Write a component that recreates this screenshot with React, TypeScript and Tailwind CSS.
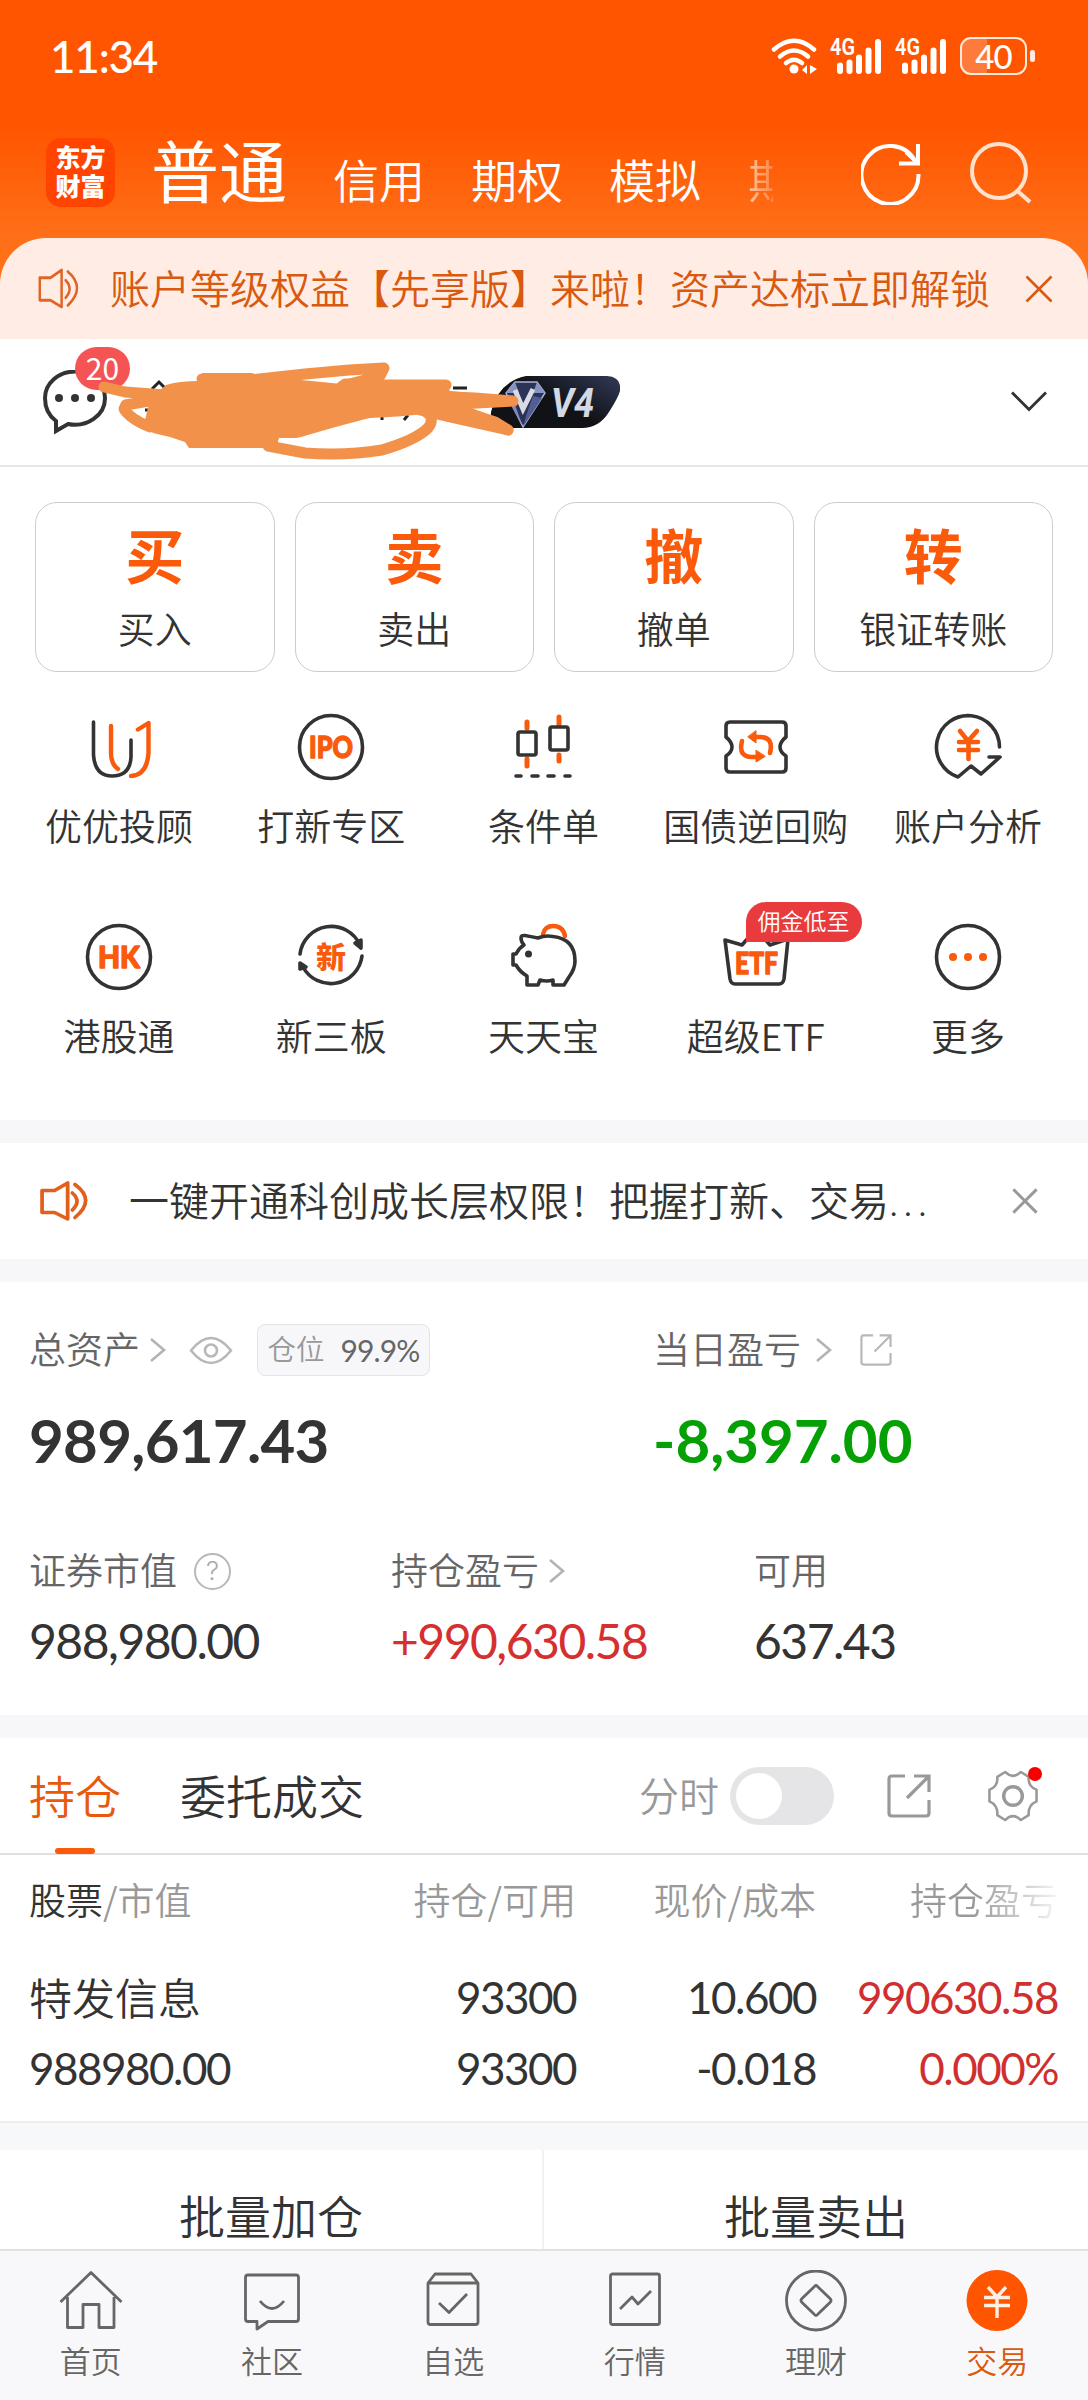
import type { ReactNode } from "react";
import clsx from "clsx";

const cards = [
  { glyph: "买", label: "买入" },
  { glyph: "卖", label: "卖出" },
  { glyph: "撤", label: "撤单" },
  { glyph: "转", label: "银证转账" },
];

const INK = "#333333";
const ORANGE = "#f95a0b";

function Speaker({ className, color, strokeWidth }: { className: string; color: string; strokeWidth: number }) {
  return (
    <svg className={className} viewBox="0 0 46 40" preserveAspectRatio="none" fill="none" stroke={color} strokeWidth={strokeWidth} strokeLinecap="round" strokeLinejoin="round">
      <path d="M2 9.5H14L26.5 2V38L14 31.5H2Z" />
      <path d="M31 12Q40 20 31 29" />
      <path d="M33.5 3.5Q54 19 33.5 36.5" />
    </svg>
  );
}

function Close({ className, color, strokeWidth }: { className: string; color: string; strokeWidth: number }) {
  return (
    <svg className={className} viewBox="0 0 28 28" fill="none" stroke={color} strokeWidth={strokeWidth}>
      <path d="M1.5 1.5L26.5 26.5M26.5 1.5L1.5 26.5" />
    </svg>
  );
}

function Chevron({ className }: { className?: string }) {
  return (
    <svg className={clsx("h-6 w-4 shrink-0", className)} viewBox="0 0 16 24" fill="none" stroke="#b3b3b3" strokeWidth="2.600">
      <path d="M1 1L14 12L1 23" />
    </svg>
  );
}

function Signal() {
  return (
    <svg className="h-9 w-[52px] overflow-visible" viewBox="0 0 52 36" fill="#fff">
      <text x="0" y="17" fontSize="23" fontWeight="600" textLength="25" lengthAdjust="spacingAndGlyphs" fontFamily="Roboto, sans-serif">4G</text>
      <rect x="7" y="24.500" width="6" height="11.500" rx="3" />
      <rect x="16.500" y="21.500" width="6" height="14.500" rx="3" />
      <rect x="26" y="16.500" width="6" height="19.500" rx="3" />
      <rect x="35.500" y="9.500" width="6" height="26.500" rx="3" />
      <rect x="45" y="1" width="6" height="35" rx="3" />
    </svg>
  );
}

function StatusBar() {
  return (
    <div className="flex h-[114px] items-center pr-[53px] pb-0.5 pl-[50px] text-white">
      <span className="w-[110px] font-['Lato',sans-serif] text-[44px] leading-none font-medium tracking-[-1.200px]">11:34</span>
      <svg className="ml-auto h-9 w-[46px]" viewBox="0 0 46 36" fill="none" stroke="#fff" strokeWidth="4.500" strokeLinecap="round">
        <path d="M3 11.500Q23 -6 43 11.500" />
        <path d="M9 18.500Q23 6.500 37 18.500" />
        <path d="M15 25Q23 18.500 31 25" />
        <circle cx="23" cy="31" r="4.500" fill="#fff" stroke="none" />
        <path d="M31 32L36 27V36ZM39 27L46 31L39 36Z" fill="#fff" stroke="none" />
      </svg>
      <div className="ml-[13px] flex gap-[13px]">
        <Signal />
        <Signal />
      </div>
      <div className="ml-[13px] flex items-center gap-[3px]">
        <div className="flex h-[38px] w-[67px] items-center justify-center rounded-[11px] border-[2.500px] border-[#ffeadd] bg-[linear-gradient(90deg,#ff7b3c_40%,transparent_40%)] font-['Lato',sans-serif] text-[33px] leading-none font-medium tracking-[-1px]">
          40
        </div>
        <div className="h-3 w-[5px] rounded-full bg-[#ffeadd]" />
      </div>
    </div>
  );
}

function Header() {
  return (
    <div className="flex h-[124px] pl-[46px] text-white">
      <div className="mt-6 flex h-[69px] w-[69px] flex-col items-center justify-center rounded-[15px] bg-[#ff4400] pb-[3px] text-[25px] leading-[29px] font-black">
        <span>东方</span>
        <span>财富</span>
      </div>
      <div className="ml-9 flex items-baseline whitespace-nowrap">
        <span className="text-[68px] leading-[110px] font-normal">普通</span>
        <span className="ml-[46px] text-[46px]">信用</span>
        <span className="ml-[46px] text-[46px]">期权</span>
        <span className="ml-[46px] text-[46px]">模拟</span>
        <span className="ml-[47px] w-[25px] overflow-hidden bg-[linear-gradient(90deg,#ffc7a0,#ff8543)] bg-clip-text text-[46px] text-transparent">期</span>
      </div>
      <svg className="mt-[29px] ml-[88px] h-[62px] w-[60px]" viewBox="0 0 60 62" fill="none" stroke="#fff" strokeWidth="4">
        <path d="M57.500 31A28.500 29 0 1 1 54 18" />
        <path d="M57 1V20.500H38" />
        <path d="M45 9L57 20" />
      </svg>
      <svg className="mt-7 ml-[49px] h-[62px] w-[63px]" viewBox="0 0 63 62" fill="none" stroke="#ffe3d0" strokeWidth="4">
        <circle cx="29" cy="29" r="27" />
        <path d="M47.500 49L60 60" />
      </svg>
    </div>
  );
}

// Hand-drawn strokes laid over the account name
function Scribble() {
  return (
    <svg className="absolute top-0 left-0 h-[128px] w-[560px]" viewBox="0 0 560 128" fill="none">
      <g stroke="#222" strokeWidth="3">
        <path d="M152 50L159 43L166 50M140 57L144 60M145 71H150" />
        <path d="M374 51H387M382 74V81M404 81L408 76M431 54V60M441 70V73M453 49H467" />
      </g>
      <g stroke="#f2924a" fill="none" strokeLinecap="round" strokeLinejoin="round" strokeWidth="11">
        <path d="M104 48L125 53L165 56" />
        <path d="M240 42L305 35L349 31L384 29L380 37L342 47" />
        <path d="M202 40H250" />
        <path d="M345 45L380 46H446" />
        <path d="M430 57L475 59L513 62L440 66" />
        <path d="M126 66L124 70Q130 80 150 88" />
        <path d="M126 66L160 60" />
        <path d="M268 107L305 114Q345 117 382 111Q416 101 428 89Q436 79 425 72" />
        <path d="M420 71L450 78L508 91" />
        <path d="M430 66L470 75L495 83L508 91" />
      </g>
      <path
        d="M166 46Q178 42 200 42L202 34H252L260 37L342 45H445L450 52L470 54L510 59V67L466 67L495 78L490 86L434 74Q400 78 370 79Q345 85 301 98L296 99H279L276 109H189L185 103L170 98L153 94L144 86L148 68L150 60Z"
        fill="#f2924a"
      />
    </svg>
  );
}

function AccountRow() {
  return (
    <div className="relative flex h-32 items-start border-b-2 border-[#e6e6e6] bg-white">
      <svg className="mt-[31px] ml-[42px] h-[65px] w-[66px]" viewBox="0 0 66 65" fill="none" stroke="#333" strokeWidth="4">
        <path d="M14 51Q3 43 3 28A30 26.500 0 0 1 63 28A30 26.500 0 0 1 26 54L14 61Z" strokeLinejoin="miter" />
        <g fill="#333" stroke="none">
          <circle cx="17" cy="28" r="4" />
          <circle cx="33" cy="28" r="4" />
          <circle cx="49" cy="28" r="4" />
        </g>
      </svg>
      <div className="absolute top-2 left-[75px] flex h-[43px] w-[55px] items-center justify-center rounded-full bg-[#f55454] pb-[3px] text-[30px] leading-none font-normal text-white">
        20
      </div>
      <svg className="mt-[37px] ml-[382px] h-[52px] w-[130px]" viewBox="0 0 130 52">
        <defs>
          <linearGradient id="vip" x1="0.200" x2="0.900" y1="0.500" y2="0">
            <stop offset="0.300" stopColor="#111216" />
            <stop offset="1" stopColor="#2d3550" />
          </linearGradient>
        </defs>
        <path d="M36 0H117Q132 1 130 15Q128 22 119 36Q109 52 92 52H6Q0 50 1 36Q8 6 36 0Z" fill="url(#vip)" />
        <path d="M25 6H47L55 17L33 51L16 17Z" fill="#2c3358" stroke="#aab4d6" strokeWidth="1.500" />
        <path d="M25 6L29 17L16 17ZM47 6L43 17L55 17Z" fill="#8793c0" />
        <path d="M22 20L29 40L33 51L18 24Z" fill="#7e89b8" />
        <path d="M43 20L36 40L33 51L52 22Z" fill="#525d94" />
        <path d="M25 14L33 33L43 13" fill="none" stroke="#d9dbe4" strokeWidth="5" />
        <text x="61" y="41" fontSize="41" fontWeight="700" fontStyle="italic" fill="#d3d8e4" textLength="43" lengthAdjust="spacingAndGlyphs" fontFamily="Roboto, sans-serif">V4</text>
      </svg>
      <Scribble />
      <svg className="mt-[52px] ml-[391px] h-[22px] w-9" viewBox="0 0 36 22" fill="none" stroke="#333" strokeWidth="3">
        <path d="M1 1.500L18 18.500L35 1.500" />
      </svg>
    </div>
  );
}

function IconSvg({ children }: { children: ReactNode }) {
  return (
    <svg className="h-[72px] w-[72px] overflow-visible" viewBox="0 0 72 72" fill="none" stroke={INK} strokeWidth="3.600" strokeLinecap="round" strokeLinejoin="round">
      {children}
    </svg>
  );
}

function IconText({ x, y, width, children }: { x: number; y: number; width: number; children: string }) {
  return (
    <text x={x} y={y} fontSize="31" fontWeight="900" fill={ORANGE} stroke={ORANGE} strokeWidth="1.400" textLength={width} lengthAdjust="spacingAndGlyphs" fontFamily="Lato, sans-serif">
      {children}
    </text>
  );
}

const tools: { label: string; tag?: string; icon: ReactNode }[] = [
  {
    label: "优优投顾",
    icon: (
      <>
        <path d="M10.500 11V44Q12 65 29 65Q47 65 48 46V29" />
        <g stroke={ORANGE} strokeWidth="4.400">
          <path d="M28 15V42Q28 53 35 58" />
          <path d="M55 18.500L65.500 12V42Q64 64 48 65" />
        </g>
      </>
    ),
  },
  {
    label: "打新专区",
    icon: (
      <>
        <circle cx="36" cy="36" r="31.500" />
        <IconText x={14} y={47} width={44}>IPO</IconText>
      </>
    ),
  },
  {
    label: "条件单",
    icon: (
      <>
        <g stroke={ORANGE} strokeWidth="5">
          <path d="M20 11V17M20 48V55M52 6V14M52 44V50" />
        </g>
        <rect x="11" y="21" width="18" height="23" rx="2" />
        <rect x="43" y="16" width="18" height="23" rx="2" />
        <path d="M9 65H14M25 65H31M41 65H47M58 65H63" />
      </>
    ),
  },
  {
    label: "国债逆回购",
    icon: (
      <>
        <path d="M10 11H62Q66 11 66 15V26Q60 31 60 36Q60 41 66 45V57Q66 61 62 61H10Q6 61 6 57V45Q12 41 12 36Q12 31 6 26V15Q6 11 10 11Z" />
        <g stroke={ORANGE} strokeWidth="4.600">
          <path d="M22 30Q18 46 32 46H37" />
          <path d="M50 42Q54 26 40 26H35" />
        </g>
        <path d="M36 39.500V51L45 45.500ZM36 20V32L28 26Z" fill={ORANGE} stroke={ORANGE} strokeWidth="1" />
      </>
    ),
  },
  {
    label: "账户分析",
    icon: (
      <>
        <path d="M67.500 36A31.500 31.500 0 1 0 26 66L39 55L49 63L68 46H57" />
        <g stroke={ORANGE} strokeWidth="4.600">
          <path d="M28 20L36 30L45 20M27 31H46M27 39H46M36.500 31V48" />
        </g>
      </>
    ),
  },
  {
    label: "港股通",
    icon: (
      <>
        <circle cx="36" cy="36" r="31.500" />
        <IconText x={15} y={47} width={42}>HK</IconText>
      </>
    ),
  },
  {
    label: "新三板",
    icon: (
      <>
        <path d="M5 33A31.500 31.500 0 0 1 65 24" />
        <path d="M67 35A31.500 31.500 0 0 1 8 46" />
        <path d="M60 22L66 27V19ZM5 48V42L11 46Z" fill={INK} />
        <text x="21" y="47" fontSize="30" fontWeight="900" fill={ORANGE} stroke="none" fontFamily="'Noto Sans CJK SC', sans-serif">新</text>
      </>
    ),
  },
  {
    label: "天天宝",
    icon: (
      <>
        <path d="M36 13Q38 5 46 5Q56 5 58 15" stroke={ORANGE} strokeWidth="4.400" />
        <path d="M14 17Q14 14 18 14.500Q26 16 31 17Q38 14 46 15.500Q68 18 68 40Q68 48 62 56L57 64H46V59Q40 61 33 59L31 64H20V55Q13 51 9 44H6V33H9Q12 27 17 24Q14 21 14 17Z" />
        <circle cx="21.500" cy="33" r="3.500" fill={INK} stroke="none" />
      </>
    ),
  },
  {
    label: "超级ETF",
    tag: "佣金低至",
    icon: (
      <>
        <path d="M5 19L22 24L36 8L50 24L68 18L64 58Q63 63 59 63H15Q11 63 10 58Z" />
        <IconText x={15} y={52.500} width={43}>ETF</IconText>
      </>
    ),
  },
  {
    label: "更多",
    icon: (
      <>
        <circle cx="36" cy="36" r="31.500" />
        <g fill={ORANGE} stroke="none">
          <circle cx="21" cy="36" r="4" />
          <circle cx="36" cy="36" r="4" />
          <circle cx="51" cy="36" r="4" />
        </g>
      </>
    ),
  },
];

function ToolGrid() {
  return (
    <div className="grid h-[448px] auto-rows-[210px] grid-cols-5 pt-[39px] pr-[14px] pl-[13px]">
      {tools.map((tool) => (
        <div key={tool.label} className="relative flex flex-col items-center">
          <IconSvg>{tool.icon}</IconSvg>
          <div className="mt-6 text-[37px] leading-[36px] whitespace-nowrap">{tool.label}</div>
          {tool.tag && (
            <div className="absolute -top-[19px] left-[96px] flex h-10 w-[116px] items-center justify-center rounded-[20px] rounded-bl-none bg-[#e93b3d] pb-[4px] text-[23px] leading-none text-white">
              {tool.tag}
            </div>
          )}
        </div>
      ))}
    </div>
  );
}

function Share({ className, strokeWidth }: { className: string; strokeWidth: number }) {
  return (
    <svg className={className} viewBox="0 0 44 44" fill="none" stroke="currentColor" strokeWidth={strokeWidth}>
      <path d="M18 2H5Q2 2 2 5V39Q2 42 5 42H39Q42 42 42 39V26" />
      <path d="M27 2H42V18M41 3L20 24" />
    </svg>
  );
}

function Assets() {
  return (
    <div className="h-[433px] pl-[29px] text-[#666]">
      <div className="flex h-[136px] items-center">
        <div className="flex w-[624px] items-center">
          <span className="pb-1 text-[37px] leading-none">总资产</span>
          <Chevron className="ml-[10px]" />
          <svg className="ml-[23px] h-[29px] w-[44px]" viewBox="0 0 44 28" fill="none" stroke="#b8b8b8" strokeWidth="2.600">
            <path d="M2 14Q22 -11 42 14Q22 39 2 14Z" />
            <circle cx="22" cy="14" r="6" />
          </svg>
          <div className="ml-6 flex h-[52px] w-[173px] items-center justify-center gap-4 rounded-lg border border-[#e3e3e8] bg-[#f7f7fa]">
            <span className="pb-[3px] text-[28.500px] leading-none text-[#999]">仓位</span>
            <span className="font-['Lato',sans-serif] text-[30px] leading-none font-normal tracking-[-0.900px]">99.9%</span>
          </div>
        </div>
        <span className="pb-1 text-[37px] leading-none">当日盈亏</span>
        <Chevron className="ml-[15px]" />
        <Share className="ml-[28px] h-8 w-8 text-[#b8b8b8]" strokeWidth={3} />
      </div>
      <div className="flex h-[43px] items-center font-['Lato',sans-serif] text-[60px] leading-none font-bold">
        <span className="w-[624px] tracking-[-0.700px] text-[#333]">989,617.43</span>
        <span className="text-[#04a004]">-8,397.00</span>
      </div>
      <div className="mt-[87px] flex h-[42px] items-center text-[37px] leading-none">
        <div className="flex w-[362px] items-center">
          证券市值
          <div className="mt-1 ml-[17px] flex h-[37px] w-[37px] items-center justify-center rounded-full border-[2.500px] border-[#b8b8b8] font-['Inter',sans-serif] text-[26px] text-[#aaa]">?</div>
        </div>
        <div className="flex w-[363px] items-center">
          持仓盈亏
          <Chevron className="mt-1 ml-[10px]" />
        </div>
        可用
      </div>
      <div className="mt-[28px] flex h-[46px] items-center font-['Lato',sans-serif] text-[48px] leading-none font-normal tracking-[-1.500px] text-[#333]">
        <span className="w-[362px]">988,980.00</span>
        <span className="w-[363px] text-[#d5302f]">+990,630.58</span>
        <span>637.43</span>
      </div>
    </div>
  );
}

function HoldingTabs() {
  return (
    <div className="relative flex h-[117px] items-center border-b-2 border-[#e0e0e0] pl-[29px] text-[46px] leading-none">
      <span className="pb-1 text-[#e8590c]">持仓</span>
      <span className="ml-[59px] pb-1">委托成交</span>
      <span className="ml-[275px] pb-1 text-[40px] text-[#999]">分时</span>
      <div className="ml-[11px] flex h-[58px] w-[104px] items-center rounded-full bg-[#e5e5e7] px-[6px]">
        <div className="h-[46px] w-[46px] rounded-full bg-white" />
      </div>
      <Share className="ml-[53px] h-11 w-11 text-[#999]" strokeWidth={3.2} />
      <div className="relative ml-[56px]">
        <svg className="h-[52px] w-[52px]" viewBox="0 0 52 53" fill="none" stroke="#999" strokeWidth="2.600" strokeLinejoin="round">
          <path d="M18 2Q26 10 34 2L42 7Q41 17 50 20V32Q41 36 42 46L34 51Q26 43 18 51L10 46Q11 36 2 32V20Q11 17 10 7Z" />
          <circle cx="26" cy="26.500" r="9.500" strokeWidth="3.500" />
        </svg>
        <div className="absolute -top-[3px] left-[41px] h-[14px] w-[14px] rounded-full bg-[#f90000]" />
      </div>
      <div className="absolute -bottom-px left-[55px] h-[6px] w-10 rounded-full bg-[#fa5a0a]" />
    </div>
  );
}

function HoldingTable() {
  return (
    <div className="grid h-[266px] grid-cols-[307px_240px_240px_242px] grid-rows-[88px_108px_34px] items-center pl-[29px] text-right leading-none">
      <span className="text-left text-[37px] text-[#999]">
        <span className="text-[#333]">股票</span>/市值
      </span>
      <span className="text-[37px] text-[#999]">持仓/可用</span>
      <span className="text-[37px] text-[#999]">现价/成本</span>
      <span className="bg-[linear-gradient(90deg,#999_65%,#f5f5f5)] bg-clip-text text-[37px] leading-[48px] text-transparent">持仓盈亏</span>

      <span className="pb-0.5 text-left text-[43px]">特发信息</span>
      <Num>93300</Num>
      <Num>10.600</Num>
      <Num red>990630.58</Num>

      <Num left>988980.00</Num>
      <Num>93300</Num>
      <Num>-0.018</Num>
      <Num red>0.000%</Num>
    </div>
  );
}

function Num({ children, red, left }: { children: ReactNode; red?: boolean; left?: boolean }) {
  return (
    <span className={clsx("font-['Lato',sans-serif] text-[44px] font-normal tracking-[-1.500px]", red && "text-[#d02f2f]", left && "text-left")}>
      {children}
    </span>
  );
}

const nav: { label: string; icon: ReactNode }[] = [
  { label: "首页", icon: <path d="M1.500 32L32 2.500L62.500 32M8.500 27V57.500H24V34.500H40V57.500H55V27" /> },
  {
    label: "社区",
    icon: (
      <>
        <path d="M8 5H56Q58.500 5 58.500 7.500V49Q58.500 51.500 56 51.500H28L17 59V51.500H8Q5.500 51.500 5.500 49V7.500Q5.500 5 8 5Z" />
        <path d="M20 31Q32 46 44 31" />
      </>
    ),
  },
  {
    label: "自选",
    icon: (
      <>
        <path d="M7 13V52Q7 54.500 9.500 54.500H54.500Q57 54.500 57 52V13L50 4H14L7 13H57" />
        <path d="M18 33L28 42.500L46 24" />
      </>
    ),
  },
  {
    label: "行情",
    icon: (
      <>
        <rect x="7.500" y="4" width="49" height="50.500" rx="2" />
        <path d="M17 39L29 27L35 34L48 21" />
      </>
    ),
  },
  {
    label: "理财",
    icon: (
      <>
        <circle cx="32" cy="30.500" r="29.500" />
        <path d="M30 17Q32 14 34 17L46 28.500Q48 30.500 46 32.500L34 44Q32 47 30 44L18 32.500Q16 30.500 18 28.500Z" />
      </>
    ),
  },
  {
    label: "交易",
    icon: (
      <>
        <circle cx="32" cy="30.500" r="30.500" fill="#ff5500" stroke="none" />
        <path d="M23 17L32 27L41 17M19 27.500H45M19 35.500H45M32 27V48" stroke="#fff0e4" strokeWidth="3.400" />
      </>
    ),
  },
];

function BottomNav() {
  return (
    <nav className="grid h-[151px] grid-cols-6 border-t-2 border-[#e2e2e4] bg-[#f8f8fa] text-[31px] leading-none text-[#666]">
      {nav.map((item) => (
        <div key={item.label} className={clsx("flex flex-col items-center pt-[19px]", item.label === "交易" && "text-[#d9590f]")}>
          <svg className="h-[62px] w-16" viewBox="0 0 64 62" fill="none" stroke="#666" strokeWidth="2.800" strokeLinejoin="round">
            {item.icon}
          </svg>
          <span className="mt-3">{item.label}</span>
        </div>
      ))}
    </nav>
  );
}

export default function App() {
  return (
    <main className="h-[2400px] w-[1088px] overflow-hidden bg-white font-['Noto_Sans_CJK_SC',sans-serif] font-[350] text-[#333]">
      <div className="bg-[linear-gradient(180deg,#ff5500_125px,#ff6f18_235px,#ff7119_300px)]">
        <StatusBar />
        <Header />
        <div className="flex h-[101px] items-center rounded-t-[46px] bg-[#ffede5] pl-[38px] text-[40px] leading-none whitespace-nowrap text-[#d9590f]">
          <Speaker className="h-[41px] w-[41px]" color="#df6526" strokeWidth={2.8} />
          <span className="ml-[31px] w-[880px] pb-1">账户等级权益【先享版】来啦！资产达标立即解锁</span>
          <Close className="ml-[35px] h-7 w-7" color="#d9590f" strokeWidth={2.6} />
        </div>
      </div>
      <AccountRow />

      {/* Trade actions */}
      <div className="grid h-[205px] grid-cols-4 gap-5 px-[35px] pt-[35px]">
        {cards.map((card) => (
          <div key={card.label} className="flex h-[170px] flex-col items-center rounded-[22px] border-[1.500px] border-[#cccccc]">
            <span className="mt-[21px] text-[59px] leading-[60px] font-bold text-[#fa5a0a]">{card.glyph}</span>
            <span className="mt-[26px] text-[37px] leading-[36px]">{card.label}</span>
          </div>
        ))}
      </div>
      <ToolGrid />

      {/* Notice */}
      <div className="flex h-[162px] items-center border-y-[23px] border-[#f7f7fa] pl-[40px]">
        <Speaker className="h-10 w-12" color="#e2601c" strokeWidth={3.6} />
        <span className="ml-[41px] w-[883px] pb-0.5 text-[40px] leading-none whitespace-nowrap">
          一键开通科创成长层权限！把握打新、交易<span className="font-['Lato',sans-serif] tracking-[5px]">...</span>
        </span>
        <Close className="h-[26px] w-[26px]" color="#999" strokeWidth={3.2} />
      </div>

      <Assets />
      <div className="h-[23px] bg-[#f7f7fa]" />
      <HoldingTabs />
      <HoldingTable />

      <div className="h-[29px] border-t-2 border-[#ededef] bg-[#f7f8fa]" />
      <div className="grid h-[99px] grid-cols-2 text-[46px] leading-none">
        <div className="flex items-center justify-center border-r-2 border-[#f1f1f1] pt-[29px]">批量加仓</div>
        <div className="flex items-center justify-center pt-[29px]">批量卖出</div>
      </div>
      <BottomNav />
    </main>
  );
}
